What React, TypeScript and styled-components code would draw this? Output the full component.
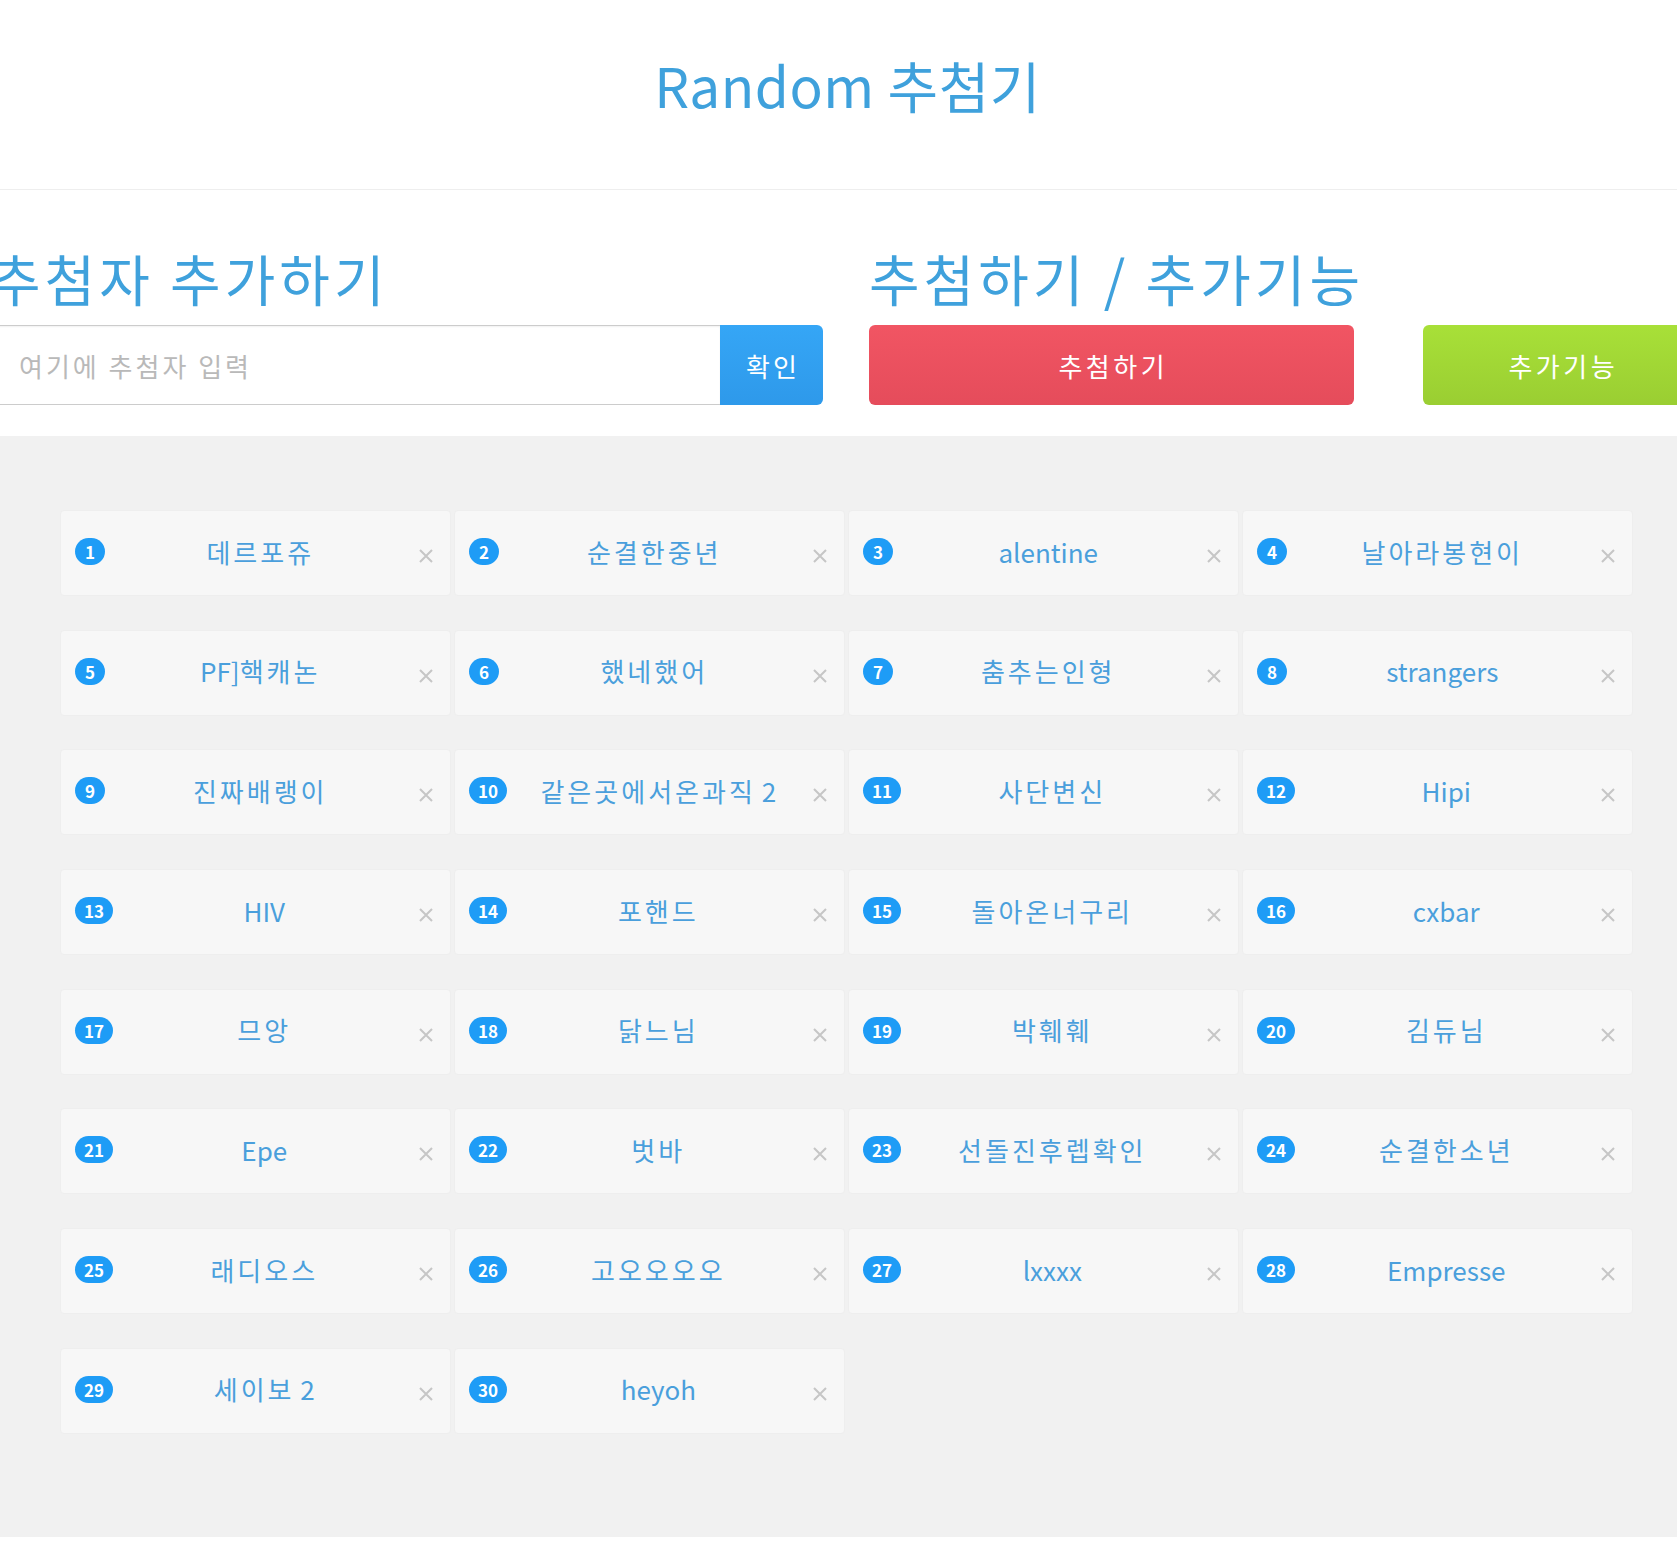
import React from 'react';
import styled, { createGlobalStyle } from 'styled-components';

const GlobalStyle = createGlobalStyle`
  html, body {
    margin: 0;
    padding: 0;
    background: #ffffff;
  }
  body {
    font-family: "Noto Sans CJK KR", "Noto Sans", sans-serif;
    overflow-x: hidden;
  }
  * {
    box-sizing: border-box;
  }
`;

const Page = styled.div`
  width: 100%;
  overflow: hidden;
`;

const Header = styled.header`
  height: 190px;
  padding: 51px 0 0 18px;
  border-bottom: 1px solid #eeeeee;
  text-align: center;
`;

const Title = styled.h1`
  margin: 0;
  font-size: 55px;
  line-height: 66px;
  font-weight: 400;
  color: #3fa1dc;
  letter-spacing: 0.5px;
`;

const TopSection = styled.section`
  display: flex;
  gap: 46px;
  margin-left: -10px;
  padding: 54px 0 31px;
`;

const Column = styled.div<{ $width?: number }>`
  flex: 0 0 ${(p) => (p.$width ? `${p.$width}px` : 'auto')};
  display: flex;
  flex-direction: column;
  gap: 15px;
`;

const Heading = styled.h2`
  margin: 0;
  font-size: 55px;
  line-height: 66px;
  font-weight: 400;
  color: #3fa1dc;
  letter-spacing: 4px;
  white-space: nowrap;
`;

const InputGroup = styled.div`
  display: flex;
  height: 80px;
`;

const NameInput = styled.input`
  flex: 1;
  min-width: 0;
  height: 100%;
  border: 1px solid #cccccc;
  border-right: none;
  box-shadow: inset 0 1px 2px rgba(0, 0, 0, 0.06);
  padding: 0 0 0 28px;
  font-family: inherit;
  font-size: 26px;
  letter-spacing: 3px;
  color: #555;
  outline: none;
  &::placeholder {
    color: #b9b9b9;
  }
`;

const ConfirmButton = styled.button`
  flex: 0 0 103px;
  height: 100%;
  border: none;
  border-radius: 0 6px 6px 0;
  background: linear-gradient(#35a6f6, #2e99ea);
  color: #ffffff;
  font-family: inherit;
  font-size: 26px;
  letter-spacing: 3px;
  text-indent: 3px;
`;

const ButtonRow = styled.div`
  display: flex;
  gap: 69px;
  padding-left: 3px;
  margin-left: -3px;
`;

const ActionButton = styled.button<{ $tone: 'red' | 'green' }>`
  flex: 0 0 ${(p) => (p.$tone === 'red' ? '485px' : '277px')};
  height: 80px;
  border: none;
  border-radius: 6px;
  background: ${(p) =>
    p.$tone === 'red'
      ? 'linear-gradient(#f15563, #e54c5b)'
      : 'linear-gradient(#a8e038, #9ace32)'};
  color: #ffffff;
  font-family: inherit;
  font-size: 26px;
  letter-spacing: 3.5px;
  text-indent: 3.5px;
`;

const Board = styled.section`
  background: #f1f1f1;
  padding: 74px 0 103px 60px;
`;

const Grid = styled.div`
  display: grid;
  grid-template-columns: repeat(4, 390.5px);
  column-gap: 3.5px;
  row-gap: 33.7px;
`;

const Card = styled.div`
  height: 86px;
  display: flex;
  align-items: center;
  padding: 0 14px;
  background: #f7f7f7;
  border: 1px solid #eeeeee;
  border-radius: 4px;
`;

const Badge = styled.span`
  flex: 0 0 auto;
  min-width: 30px;
  height: 27px;
  padding: 0 9px;
  border-radius: 14px;
  background: #1e9cf6;
  color: #ffffff;
  font-size: 17px;
  font-weight: 700;
  line-height: 27px;
  text-align: center;
  margin-top: -3px;
`;

const Name = styled.span`
  flex: 1;
  text-align: center;
  font-size: 26px;
  color: #4a9fdc;
  white-space: nowrap;
  margin-top: -4px;
`;

const Hangul = styled.span`
  letter-spacing: 3px;
`;

const Remove = styled.span`
  flex: 0 0 20px;
  display: flex;
  justify-content: center;
  margin-top: 6px;
`;

const names = [
  '데르포쥬', '순결한중년', 'alentine', '날아라봉현이',
  'PF]핵캐논', '했네했어', '춤추는인형', 'strangers',
  '진짜배랭이', '같은곳에서온과직 2', '사단변신', 'Hipi',
  'HIV', '포핸드', '돌아온너구리', 'cxbar',
  '므앙', '닭느님', '박훼훼', '김듀님',
  'Epe', '벗바', '선돌진후렙확인', '순결한소년',
  '래디오스', '고오오오오', 'lxxxx', 'Empresse',
  '세이보 2', 'heyoh',
];

// Hangul runs are set a little wider than the Latin ones
const renderName = (name: string) =>
  name.split(/([가-힣]+)/).map((part, i) =>
    /[가-힣]/.test(part) ? <Hangul key={i}>{part}</Hangul> : part
  );

const CloseIcon = () => (
  <svg width="14" height="14" viewBox="0 0 14 14">
    <path d="M1 1 L13 13 M13 1 L1 13" stroke="#c6c6c6" strokeWidth="2" />
  </svg>
);

const App = () => {
  return (
    <>
      <GlobalStyle />
      <Page>
        <Header>
          <Title>Random 추첨기</Title>
        </Header>
        <TopSection>
          <Column $width={833}>
            <Heading>추첨자 추가하기</Heading>
            <InputGroup>
              <NameInput placeholder="여기에 추첨자 입력" />
              <ConfirmButton>확인</ConfirmButton>
            </InputGroup>
          </Column>
          <Column>
            <Heading>추첨하기 / 추가기능</Heading>
            <ButtonRow>
              <ActionButton $tone="red">추첨하기</ActionButton>
              <ActionButton $tone="green">추가기능</ActionButton>
            </ButtonRow>
          </Column>
        </TopSection>
        <Board>
          <Grid>
            {names.map((name, i) => (
              <Card key={i}>
                <Badge>{i + 1}</Badge>
                <Name>{renderName(name)}</Name>
                <Remove>
                  <CloseIcon />
                </Remove>
              </Card>
            ))}
          </Grid>
        </Board>
      </Page>
    </>
  );
};

export default App;
